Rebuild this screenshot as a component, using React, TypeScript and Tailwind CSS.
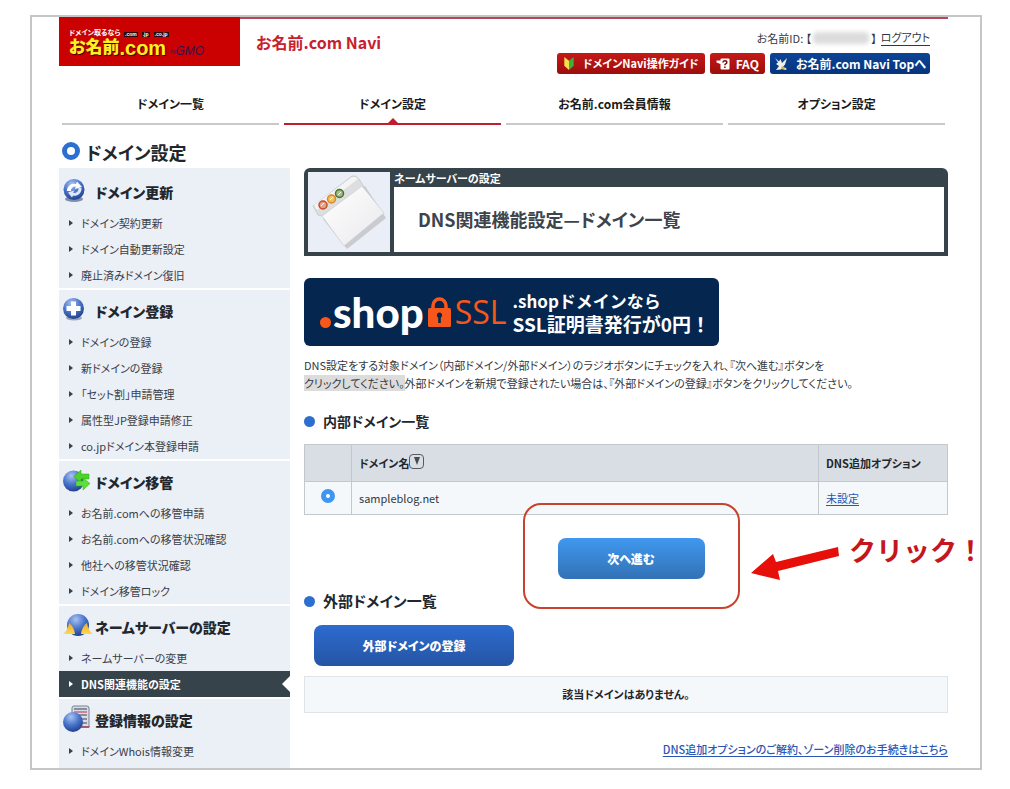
import type { ReactNode } from 'react';

const navTabs = [
  { label: 'ドメイン一覧', active: false },
  { label: 'ドメイン設定', active: true },
  { label: 'お名前.com会員情報', active: false },
  { label: 'オプション設定', active: false },
];

function GlobeDefs() {
  return (
    <svg className="absolute h-0 w-0" aria-hidden="true">
      <defs>
        <radialGradient id="globe" cx="0.4" cy="0.25" r="0.8">
          <stop offset="0" stopColor="#a9c3f0" />
          <stop offset="0.5" stopColor="#4a76cc" />
          <stop offset="1" stopColor="#1d3a86" />
        </radialGradient>
        <linearGradient id="gold" x1="0" y1="0" x2="0" y2="1">
          <stop offset="0" stopColor="#f0a92c" />
          <stop offset="1" stopColor="#fbd94e" />
        </linearGradient>
        <linearGradient id="sheet" x1="0" y1="0" x2="1" y2="1">
          <stop offset="0" stopColor="#ffffff" />
          <stop offset="1" stopColor="#e9e9ec" />
        </linearGradient>
      </defs>
    </svg>
  );
}

function RenewIcon() {
  return (
    <svg viewBox="0 0 30 26" className="h-[26px] w-[30px]" aria-hidden="true">
      <ellipse cx="11" cy="21" rx="9" ry="3" fill="#7d8cab" />
      <circle cx="11" cy="11.5" r="10.5" fill="url(#globe)" />
      <path d="M4 13a7 7 0 0 1 9-7l1-2.500 5 5.500-7 2 .7-2.500A4.500 4 0 0 0 8 13z" fill="#fff" />
      <path d="M18.500 10a7 7 0 0 1-8.500 7.500l-1 2-4-5 6-2-.7 2.500a4.500 4 0 0 0 5-5z" fill="#dfe8fa" />
    </svg>
  );
}

function PlusIcon() {
  return (
    <svg viewBox="0 0 30 26" className="h-[26px] w-[30px]" aria-hidden="true">
      <ellipse cx="11" cy="21" rx="8" ry="2.500" fill="#9aa6bd" />
      <circle cx="10.500" cy="11.500" r="10.500" fill="url(#globe)" />
      <path d="M8 4.500h5V9h4.500v5H13v4.500H8V14H3.500V9H8z" fill="#fff" />
    </svg>
  );
}

function TransferIcon() {
  return (
    <svg viewBox="0 0 30 26" className="h-[26px] w-[30px]" aria-hidden="true">
      <circle cx="10.500" cy="13" r="10.500" fill="url(#globe)" />
      <path d="M11 8.500l7-6.500v4h8v5h-8v4z" fill="#4fd02c" stroke="#2fa514" strokeWidth="0.500" />
      <path d="M27 15.500l-7-5.500v3h-7v5h7v4z" fill="#5be036" stroke="#2fa514" strokeWidth="0.500" />
    </svg>
  );
}

function NameServerIcon() {
  return (
    <svg viewBox="0 0 30 26" className="h-[26px] w-[30px]" aria-hidden="true">
      <circle cx="15" cy="12" r="11" fill="url(#globe)" />
      <path d="M6 10c3 2 5.500 6 6 11H0c3-2 5-5 6-11z" fill="url(#gold)" />
      <path d="M24 10c-3 2-5.500 6-6 11h12c-3-2-5-5-6-11z" fill="url(#gold)" />
    </svg>
  );
}

function RegistrationIcon() {
  return (
    <svg viewBox="0 0 30 28" className="h-[28px] w-[30px]" aria-hidden="true">
      <path d="M9 3q0-2 2-2h13q2 0 2 2v19H9z" fill="#d9dce6" stroke="#7b8090" />
      <path d="M11 4h13M11 10h13M11 14h13M11 18h13" stroke="#6e7484" strokeWidth="1.300" />
      <path d="M11 7h13" stroke="#c4566b" strokeWidth="1.300" />
      <path d="M19 21h8l-1 2h-8z" fill="#a35c74" />
      <circle cx="10" cy="17" r="10" fill="url(#globe)" />
    </svg>
  );
}

type Item = { label: string; active?: boolean };
type Section = { title: string; icon: ReactNode; items: Item[] };

const sections: Section[] = [
  {
    title: 'ドメイン更新',
    icon: <RenewIcon />,
    items: [{ label: 'ドメイン契約更新' }, { label: 'ドメイン自動更新設定' }, { label: '廃止済みドメイン復旧' }],
  },
  {
    title: 'ドメイン登録',
    icon: <PlusIcon />,
    items: [
      { label: 'ドメインの登録' },
      { label: '新ドメインの登録' },
      { label: '「セット割」申請管理' },
      { label: '属性型JP登録申請修正' },
      { label: 'co.jpドメイン本登録申請' },
    ],
  },
  {
    title: 'ドメイン移管',
    icon: <TransferIcon />,
    items: [
      { label: 'お名前.comへの移管申請' },
      { label: 'お名前.comへの移管状況確認' },
      { label: '他社への移管状況確認' },
      { label: 'ドメイン移管ロック' },
    ],
  },
  {
    title: 'ネームサーバーの設定',
    icon: <NameServerIcon />,
    items: [{ label: 'ネームサーバーの変更' }, { label: 'DNS関連機能の設定', active: true }],
  },
  {
    title: '登録情報の設定',
    icon: <RegistrationIcon />,
    items: [{ label: 'ドメインWhois情報変更' }],
  },
];

function Logo() {
  return (
    <a href="#" className="flex h-[49px] w-[181px] shrink-0 flex-col bg-[#cb0000] pt-[11px] pl-2.5">
      <span className="flex h-[9px] items-start gap-1">
        <span className="w-[51px] text-[7px] leading-[8px] font-bold whitespace-nowrap text-white">ドメイン取るなら</span>
        <span className="flex gap-1 self-end font-['Liberation_Sans',sans-serif] text-[5px] leading-[5px] font-bold text-white">
          <span className="bg-[#2b0b0b] px-px">.com</span>
          <span className="bg-[#2b0b0b] px-px">.jp</span>
          <span className="bg-[#2b0b0b] px-px">.co.jp</span>
        </span>
      </span>
      <span className="flex items-start">
        <span className="text-[17px] leading-[18px] font-black text-[#fff021] [text-shadow:1px_1px_1px_#3a0000]">お名前</span>
        <span className="mt-0.5 font-['Liberation_Sans',sans-serif] text-[20px] leading-[18px] font-bold text-[#fff021] [text-shadow:1px_1px_1px_#3a0000]">
          .com
        </span>
        <span className="mt-2.5 pl-1 font-['Liberation_Sans',sans-serif] text-[5px] leading-[9px] text-[#4a1040]">by</span>
        <span className="mt-2 font-['Liberation_Sans',sans-serif] text-[12px] leading-[12px] text-[#35124f] italic">GMO</span>
      </span>
    </a>
  );
}

function BeginnerMark() {
  return (
    <svg viewBox="0 0 12 16" className="h-[15px] w-3" aria-hidden="true">
      <path d="M1 1l5 4v10L1 10.500z" fill="#f2e24a" />
      <path d="M11 1L6 5v10l5-4.500z" fill="#3fae3a" />
    </svg>
  );
}

function FaqMark() {
  return (
    <svg viewBox="0 0 14 14" className="h-[14px] w-[14px]" aria-hidden="true">
      <path d="M4.500 2.500q0-1 1-1h7q1 0 1 1v9q0 1-1 1h-7q-1 0-1-1V7L.5 5.500v-2h4z" fill="#fff" />
      <path d="M7 5.500q0-1.700 1.900-1.700t1.900 1.600q0 1-1.100 1.500-.8.400-.8 1.300M8.900 9.500v1.400" stroke="#7a0d0d" strokeWidth="1.500" fill="none" />
    </svg>
  );
}

function NaviMark() {
  return (
    <svg viewBox="0 0 14 14" className="h-[14px] w-[14px]" aria-hidden="true">
      <path d="M1 1l4 3.500L6.500 2 8 6l5-5-2 6.500-4 5L2 13l3-4-3-2 2-1.500z" fill="#f1f1e4" />
      <path d="M8 9l4 2-1 2-4-1z" fill="#c9b46a" />
      <circle cx="11.500" cy="12" r="1" fill="#d8dff0" />
    </svg>
  );
}

function WindowPicture() {
  return (
    <svg viewBox="0 0 82 80" className="h-20 w-[82px] bg-[#e9eef7]" aria-hidden="true">
      <path d="M14 45l24 30 39-31-21-32z" fill="#c9cbd0" transform="translate(1 2)" />
      <path d="M5 34L44 4q4-1 7 3l5 8-42 29-4-1z" fill="#dcdee0" stroke="#b9bcc0" strokeWidth="0.600" />
      <path d="M6 33L44 5q3-1 6 2L9 38z" fill="#f4f4f4" />
      <path d="M14 44l40-30 22 27-40 33z" fill="url(#sheet)" stroke="#c6c8cc" strokeWidth="0.600" />
      <g strokeWidth="1.500">
        <circle cx="15" cy="33" r="4" fill="#e7a37e" stroke="#c9482c" />
        <circle cx="23.500" cy="27" r="4" fill="#ecc06a" stroke="#d98a1f" />
        <circle cx="31.500" cy="21.500" r="4" fill="#a4bb83" stroke="#44742c" />
      </g>
      <path d="M13 34l3-3M22 28l3-3M30 23l3-3" stroke="#fff" strokeWidth="1" />
    </svg>
  );
}

function SslBanner() {
  return (
    <a
      href="#"
      className="mt-[22px] flex h-[68px] w-[415px] max-w-full items-center rounded-md bg-[#04264f] pl-4 text-white"
    >
      <span className="mt-5 mr-0.5 h-[11px] w-[11px] shrink-0 rounded-full bg-[#f7571b]" />
      <span className="font-[Lato,sans-serif] text-[42px] leading-[60px] font-black">shop</span>
      <svg viewBox="0 0 23 30" className="ml-1 h-[30px] w-[23px] shrink-0" aria-hidden="true">
        <path d="M5 13V8.500a6.500 6.500 0 0 1 13 0V13" fill="none" stroke="#f7571b" strokeWidth="3.500" />
        <rect x="0" y="11" width="23" height="19" rx="1.500" fill="#f7571b" />
        <path d="M11.500 15.500a2.800 2.800 0 0 1 1.300 5.200V26h-2.600v-5.300a2.800 2.800 0 0 1 1.300-5.200z" fill="#04264f" />
      </svg>
      <span className="ml-1 font-['Open_Sans',sans-serif] text-[32px] leading-[60px] text-[#f7571b]">SSL</span>
      <span className="ml-1.5 flex flex-col leading-[23px] font-bold whitespace-nowrap [font-feature-settings:normal]">
        <span className="text-[17px]">.shopドメインなら</span>
        <span className="text-[19px]">SSL証明書発行が0円！</span>
      </span>
    </a>
  );
}

function Sidebar() {
  return (
    <nav aria-label="ドメイン設定" className="flex w-[231px] shrink-0 flex-col gap-0.5">
      {sections.map((s) => (
        <section key={s.title} className="bg-[#ebeff6] first:pt-[3px] last:pb-1">
          <h2 className="flex h-[39px] items-center gap-1.5 pt-1 text-[14px] font-black text-[#22272d]">
            <span className="flex w-[30px] shrink-0 pb-1 pl-1">
              <span className="shrink-0">{s.icon}</span>
            </span>
            {s.title}
          </h2>
          <ul>
            {s.items.map((it) => (
              <li key={it.label}>
                <a
                  href="#"
                  aria-current={it.active ? 'page' : undefined}
                  className={
                    it.active
                      ? 'flex h-[26px] items-center bg-[#37434a] pl-2.5 text-[11px] font-bold text-white'
                      : 'flex h-[26px] items-center pl-2.5 text-[11px] text-[#3a4048]'
                  }
                >
                  <svg viewBox="0 0 4 6" className="mr-2 h-[6px] w-1" fill="currentColor" aria-hidden="true">
                    <path d="M0 0l4 3-4 3z" />
                  </svg>
                  {it.label}
                  {it.active && (
                    <svg viewBox="0 0 8 16" className="ml-auto h-4 w-2" fill="#fff" aria-hidden="true">
                      <path d="M8 0v16L0 8z" />
                    </svg>
                  )}
                </a>
              </li>
            ))}
          </ul>
        </section>
      ))}
    </nav>
  );
}

export default function App() {
  return (
    <div className="bg-white pt-[15px] pr-7 pb-[19px] pl-[30px] font-['Noto_Sans_CJK_JP',sans-serif] text-[11px] text-[#33383e] [font-feature-settings:'palt']">
      <GlobeDefs />
      <div className="border-2 border-[#c6c6c6] pr-8 pl-[27px]">
        <header>
          <div className="flex border-t-2 border-[#b5475a]">
            <div className="-mt-0.5 flex flex-1">
              <Logo />
              <p className="pt-[13px] pl-4 text-[16px] leading-6 font-bold text-[#c8202c]">お名前.com Navi</p>
            </div>
            <div className="flex flex-col items-end pr-[18px]">
              <p className="flex h-[34px] items-center pt-1">
                お名前ID: 【
                <span className="mx-0.5 inline-block h-3 w-[56px] rounded bg-[#dcdcdc] blur-[2px]" />】
                <a href="#" className="ml-1 border-b border-[#33383e] leading-[15px]">
                  ログアウト
                </a>
              </p>
              <div className="flex gap-[5px] text-[12px] leading-[21px] font-bold text-white">
                <a href="#" className="flex h-[21px] items-center gap-2 rounded-[3px] bg-linear-to-b from-[#c41a17] to-[#9d0c0c] px-1.5 text-[11px]">
                  <BeginnerMark />
                  ドメインNavi操作ガイド
                </a>
                <a href="#" className="flex h-[21px] items-center gap-1.5 rounded-[3px] bg-linear-to-b from-[#c41a17] to-[#9d0c0c] px-1.5">
                  <FaqMark />
                  FAQ
                </a>
                <a href="#" className="flex h-[21px] items-center gap-2 rounded-[3px] bg-linear-to-b from-[#0c4596] to-[#06347c] px-1">
                  <NaviMark />
                  お名前.com Navi Topへ
                </a>
              </div>
            </div>
          </div>
          <nav className="mt-[17px] grid grid-cols-4 gap-[5px] px-[3px]">
            {navTabs.map((t) => (
              <a
                key={t.label}
                href="#"
                className={
                  t.active
                    ? 'relative flex h-[34px] items-center justify-center border-b-2 border-[#bf1e2e] pb-1.5 text-[12px] font-bold text-[#1a1a1a]'
                    : 'flex h-[34px] items-center justify-center border-b-2 border-[#c9c9c9] pb-1.5 text-[12px] font-bold text-[#1a1a1a]'
                }
              >
                {t.label}
                {t.active && (
                  <svg viewBox="0 0 10 5" className="absolute bottom-0 left-1/2 h-[5px] w-2.5 -translate-x-1/2" fill="#bf1e2e" aria-hidden="true">
                    <path d="M5 0l5 5H0z" />
                  </svg>
                )}
              </a>
            ))}
          </nav>
        </header>

        <h1 className="flex h-[43px] items-center gap-1.5 pt-3 pl-[3px] text-[18px] font-bold text-[#22272d]">
          <span className="mb-1 h-[18px] w-[18px] rounded-full border-[5px] border-[#2d6fd0]" />
          ドメイン設定
        </h1>

        <div className="flex gap-3.5">
          <Sidebar />
          <main className="min-w-0 flex-1">
            <div className="flex gap-1 rounded-t-md bg-[#37434a] p-1">
              <WindowPicture />
              <div className="flex flex-1 flex-col">
                <p className="h-[15px] text-[11px] leading-[12px] font-bold text-white">ネームサーバーの設定</p>
                <h2 className="flex flex-1 items-center bg-white pl-6 text-[18px] font-bold text-[#3d444b]">DNS関連機能設定—ドメイン一覧</h2>
              </div>
            </div>

            <SslBanner />

            <p className="mt-2.5 leading-[18px] whitespace-nowrap">
              DNS設定をする対象ドメイン（内部ドメイン/外部ドメイン）のラジオボタンにチェックを入れ、『次へ進む』ボタンを
              <br />
              <span className="bg-[#dcdcdc]">クリックしてください。</span>
              外部ドメインを新規で登録されたい場合は、『外部ドメインの登録』ボタンをクリックしてください。
            </p>

            <h3 className="mt-[17px] flex h-6 items-center gap-2 text-[14px] font-bold text-[#22272d]">
              <span className="h-[11px] w-[11px] rounded-full bg-[#2d6fd0]" />
              内部ドメイン一覧
            </h3>

            <table className="mt-[11px] w-full border-collapse text-left">
              <thead>
                <tr className="h-[37px] bg-[#d9dee5] text-[#22272d]">
                  <th className="w-[47px] border border-[#c3c8cc]" />
                  <th className="border border-[#c3c8cc] px-[7px] font-bold">
                    <span className="flex items-center">
                      ドメイン名
                      <button
                        type="button"
                        aria-label="ドメイン名で並べ替え"
                        className="mb-1 flex h-[15px] w-[15px] items-center justify-center rounded-sm border border-[#555b61]"
                      >
                        <svg viewBox="0 0 8 8" className="h-2 w-2" fill="#444a50" aria-hidden="true">
                          <path d="M1 0h6L4 8z" />
                        </svg>
                      </button>
                    </span>
                  </th>
                  <th className="w-[129px] border border-[#c3c8cc] px-[7px] font-bold whitespace-nowrap">DNS追加オプション</th>
                </tr>
              </thead>
              <tbody>
                <tr className="h-[33px] bg-[#f5f8fb]">
                  <td className="border border-[#c3c8cc]">
                    <input
                      id="domain-sample"
                      type="radio"
                      name="domain"
                      defaultChecked
                      className="mx-auto mb-1 block h-3.5 w-3.5 appearance-none rounded-full border-[5px] border-[#3f95f2] bg-white"
                    />
                  </td>
                  <td className="border border-[#c3c8cc] px-[7px]">
                    <label htmlFor="domain-sample">sampleblog.net</label>
                  </td>
                  <td className="border border-[#c3c8cc] px-[7px]">
                    <a href="#" className="text-[#2a55b5] underline underline-offset-2">
                      未設定
                    </a>
                  </td>
                </tr>
              </tbody>
            </table>

            <div className="relative flex justify-center pt-[23px] pl-[10px]">
              <button
                type="button"
                className="h-[41px] w-[147px] rounded-lg bg-linear-to-b from-[#3f98ee] to-[#3272b6] text-[12px] font-black text-white"
              >
                次へ進む
              </button>
              <div className="pointer-events-none absolute -top-3 right-[-36px] flex items-center">
                <span className="h-[106px] w-[217px] rounded-[18px] border-2 border-[#c8432e]" />
                <svg viewBox="0 0 90 34" className="mt-4 ml-[11px] h-[34px] w-[90px]" fill="#e60f0a" aria-hidden="true">
                  <path d="M0 26L22 7l3 8L87 0l1 9L27 24l2 9z" />
                </svg>
                <span className="mb-3 ml-2 text-[27px] leading-9 font-bold text-[#c4161c] [font-feature-settings:normal]">クリック！</span>
              </div>
            </div>

            <h3 className="mt-2.5 flex h-6 items-center gap-2 text-[15px] font-bold text-[#22272d]">
              <span className="h-[11px] w-[11px] rounded-full bg-[#2d6fd0]" />
              外部ドメイン一覧
            </h3>
            <button
              type="button"
              className="mt-3 ml-2.5 block h-[41px] w-[200px] rounded-lg bg-linear-to-b from-[#2d6bd0] to-[#2555a4] text-[12px] font-black text-white"
            >
              外部ドメインの登録
            </button>
            <p className="mt-2.5 flex h-[37px] items-center justify-center border border-[#dfe4e8] bg-[#f5f8fb] font-bold text-[#22272d]">
              該当ドメインはありません。
            </p>
            <p className="mt-[26px] text-right leading-5">
              <a href="#" className="font-medium text-[#2a55b5] underline underline-offset-2">
                DNS追加オプションのご解約、ゾーン削除のお手続きはこちら
              </a>
            </p>
          </main>
        </div>
      </div>
    </div>
  );
}
